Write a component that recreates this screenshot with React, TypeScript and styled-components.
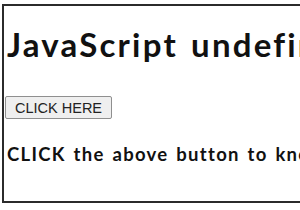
import React from 'react'
import styled, { createGlobalStyle } from 'styled-components'

const GlobalStyle = createGlobalStyle`
  html, body {
    margin: 0;
    padding: 0;
    background: #ffffff;
  }
`

// clips the page to the window
const Viewport = styled.div`
  width: 300px;
  height: 210px;
  overflow: hidden;
`

// outer frame around the page, its right side runs past the window
const Frame = styled.div`
  box-sizing: border-box;
  margin: 4px 0 0 2px;
  width: 460px;
  height: 199px;
  border: 2px solid #2b2b2b;
  border-right: none;
  padding: 0 0 0 3px;
  white-space: nowrap;
  font-family: Lato, "Open Sans", sans-serif;
  color: #111;
`

const Title = styled.h1`
  margin: 20px 0 0 0;
  font-size: 33px;
  line-height: 36px;
  font-weight: 700;
  letter-spacing: 2.2px;
  word-spacing: 3px;
`

const ClickButton = styled.button`
  display: block;
  margin: 34px 0 0 -2px;
  height: 23px;
  padding: 0 9px;
  font-family: "Liberation Sans", Arial, sans-serif;
  font-size: 14.5px;
  color: #222;
  background: #efefef;
  border: 1px solid #8f8f8f;
  border-radius: 2px;
`

const Message = styled.p`
  margin: 23px 0 0 0;
  font-size: 18.5px;
  line-height: 24px;
  font-weight: 700;
  letter-spacing: 1.3px;
  word-spacing: 2px;
`

export default function App() {
  return (
    <Viewport>
      <GlobalStyle />
      <Frame>
        <Title>JavaScript undefined</Title>
        <ClickButton>CLICK HERE</ClickButton>
        <Message>CLICK the above button to know</Message>
      </Frame>
    </Viewport>
  )
}
